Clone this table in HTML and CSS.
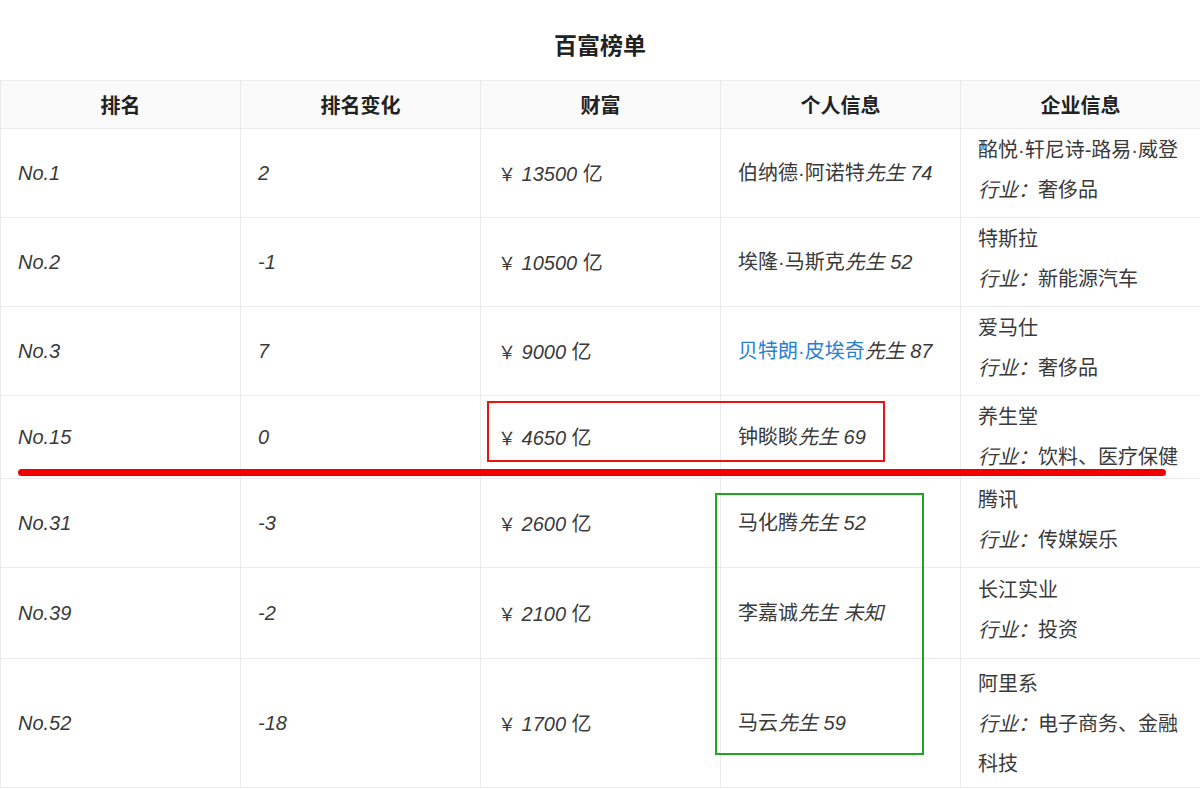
FILE: index.html
```html
<!DOCTYPE html>
<html lang="zh-CN">
<head>
<meta charset="utf-8">
<title>百富榜单</title>
<link rel="stylesheet" href="styles.css">
</head>
<body>
<div class="page">
  <h1 class="title">百富榜单</h1>
  <table class="rank">
    <colgroup><col class="c"><col class="c"><col class="c"><col class="c"><col class="c"></colgroup>
    <thead>
      <tr class="head"><th>排名</th><th>排名变化</th><th>财富</th><th>个人信息</th><th>企业信息</th></tr>
    </thead>
    <tbody>
      <tr class="r">
        <td><em>No.1</em></td><td><em>2</em></td><td><span class="yen">￥</span> <em>13500</em> 亿</td>
        <td>伯纳德·阿诺特<em>先生 74</em></td>
        <td class="co"><div>酩悦·轩尼诗-路易·威登</div><div><em>行业：</em>奢侈品</div></td>
      </tr>
      <tr class="r">
        <td><em>No.2</em></td><td><em>-1</em></td><td><span class="yen">￥</span> <em>10500</em> 亿</td>
        <td>埃隆·马斯克<em>先生 52</em></td>
        <td class="co"><div>特斯拉</div><div><em>行业：</em>新能源汽车</div></td>
      </tr>
      <tr class="r">
        <td><em>No.3</em></td><td><em>7</em></td><td><span class="yen">￥</span> <em>9000</em> 亿</td>
        <td><span class="link">贝特朗·皮埃奇</span><em>先生 87</em></td>
        <td class="co"><div>爱马仕</div><div><em>行业：</em>奢侈品</div></td>
      </tr>
      <tr class="r r-cut">
        <td><em>No.15</em></td><td><em>0</em></td><td><span class="yen">￥</span> <em>4650</em> 亿</td>
        <td>钟睒睒<em>先生 69</em></td>
        <td class="co"><div>养生堂</div><div><em>行业：</em>饮料、医疗保健</div></td>
      </tr>
      <tr class="r">
        <td><em>No.31</em></td><td><em>-3</em></td><td><span class="yen">￥</span> <em>2600</em> 亿</td>
        <td>马化腾<em>先生 52</em></td>
        <td class="co"><div>腾讯</div><div><em>行业：</em>传媒娱乐</div></td>
      </tr>
      <tr class="r r-91">
        <td><em>No.39</em></td><td><em>-2</em></td><td><span class="yen">￥</span> <em>2100</em> 亿</td>
        <td>李嘉诚<em>先生 未知</em></td>
        <td class="co"><div>长江实业</div><div><em>行业：</em>投资</div></td>
      </tr>
      <tr class="r r-tall">
        <td><em>No.52</em></td><td><em>-18</em></td><td><span class="yen">￥</span> <em>1700</em> 亿</td>
        <td>马云<em>先生 59</em></td>
        <td class="co"><div>阿里系</div><div><em>行业：</em>电子商务、金融</div><div>科技</div></td>
      </tr>
    </tbody>
  </table>
  <div class="mark mark-red-box"></div>
  <div class="mark mark-red-line"></div>
  <div class="mark mark-green-box"></div>
</div>
</body>
</html>
```
FILE: styles.css
```css
html, body {
  margin: 0;
  padding: 0;
  background: #ffffff;
}
body {
  font-family: "Liberation Sans", "Noto Sans CJK SC", sans-serif;
  color: #3a3a3a;
  overflow: hidden;
}
.page {
  position: relative;
  width: 1200px;
  height: 789px;
  overflow: hidden;
}
.title {
  margin: 0;
  padding-top: 24px;
  height: 56px;
  line-height: 44px;
  font-size: 23px;
  font-weight: bold;
  text-align: center;
  color: #222222;
}
.rank {
  width: 1201px;
  table-layout: fixed;
  border-collapse: collapse;
  font-size: 20px;
}
.rank col.c {
  width: 240px;
}
.rank th,
.rank td {
  border: 1px solid #ebebeb;
}
.head {
  height: 48px;
  background: #fafafa;
}
.head th {
  font-size: 20px;
  font-weight: bold;
  color: #222222;
  text-align: center;
  padding: 0;
}
.r {
  height: 89px;
}
.r td {
  padding: 0 17px;
  vertical-align: middle;
  line-height: 40px;
  white-space: nowrap;
}
.r td em {
  font-style: italic;
}
.yen {
  font-family: "Noto Sans CJK SC", sans-serif;
  font-size: 18px;
}
.r td.co {
  padding-bottom: 6px;
}
.r-cut {
  height: 83px;
}
.r-cut td.co {
  padding-bottom: 0;
}
.r-91 {
  height: 91px;
}
.r-tall {
  height: 129px;
}
.r-tall td.co {
  padding-top: 2px;
  padding-bottom: 0;
}
.link {
  color: #2b7fd1;
}
.mark {
  position: absolute;
  box-sizing: border-box;
}
.mark-red-box {
  left: 487px;
  top: 401px;
  width: 398px;
  height: 61px;
  border: 2px solid #ee1111;
}
.mark-red-line {
  left: 18px;
  top: 469px;
  width: 1148px;
  height: 7px;
  background: #f20000;
  border-radius: 4px;
}
.mark-green-box {
  left: 715px;
  top: 493px;
  width: 209px;
  height: 262px;
  border: 2px solid #1fa51f;
}
```
